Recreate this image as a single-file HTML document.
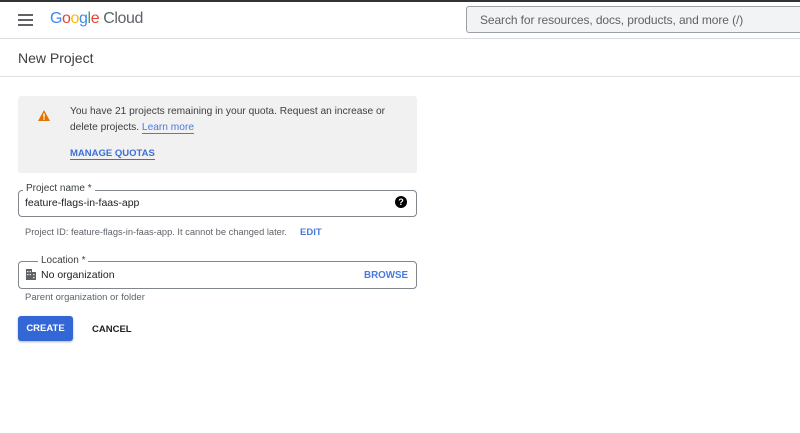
<!DOCTYPE html>
<html><head><style>
body{margin:0;width:800px;height:433px;background:#fff;font-family:"Liberation Sans",Arial,sans-serif;position:relative;overflow:hidden;color:#202124}
.a{position:absolute}
</style></head><body>
<div class="a" style="left:0;top:0;width:800px;height:2px;background:#333"></div>
<div class="a" style="left:18px;top:14px;width:15px;height:2px;background:#5f6368;box-shadow:0 5px 0 #5f6368,0 10px 0 #5f6368"></div>
<div class="a" style="left:50px;top:10px;font-size:16px;letter-spacing:-0.4px"><span style="color:#4285f4">G</span><span style="color:#ea4335">o</span><span style="color:#fbbc04">o</span><span style="color:#4285f4">g</span><span style="color:#34a853">l</span><span style="color:#ea4335">e</span> <span style="color:#5f6368">Cloud</span></div>
<div class="a" style="left:466px;top:6px;width:340px;height:27px;border:1px solid #9aa0a6;border-radius:3px;background:#f1f3f4;box-sizing:border-box"></div>
<div class="a" style="left:480px;top:13px;font-size:12px;color:#5f6368;letter-spacing:-0.1px">Search for resources, docs, products, and more (/)</div>
<div class="a" style="left:0;top:38px;width:800px;height:1px;background:#dadce0"></div>
<div class="a" style="left:18px;top:50px;font-size:14px;color:#3c4043">New Project</div>
<div class="a" style="left:0;top:76px;width:800px;height:1px;background:#e0e0e0"></div>
<div class="a" style="left:18px;top:96px;width:399px;height:77px;background:#f1f1f1;border-radius:3px"></div>
<svg class="a" style="left:38px;top:110px" width="12" height="11" viewBox="0 0 12 11"><path d="M6 0L12 11H0Z" fill="#e37400"/><rect x="5.3" y="3.5" width="1.4" height="4" fill="#fff"/><rect x="5.3" y="8.3" width="1.4" height="1.4" fill="#fff"/></svg>
<div class="a" style="left:70px;top:104px;font-size:10.2px;line-height:16px;color:#3c4043;width:330px">You have 21 projects remaining in your quota. Request an increase or delete projects. <span style="color:#4a7ae0;border-bottom:1px solid #4a7ae0">Learn more</span></div>
<div class="a" style="left:70px;top:148px;font-size:9.5px;font-weight:bold;color:#3d6fd8;border-bottom:1px solid #3d6fd8">MANAGE QUOTAS</div>
<div class="a" style="left:18px;top:190px;width:399px;height:27px;border:1px solid #80868b;border-radius:4px;box-sizing:border-box"></div>
<div class="a" style="left:23px;top:183px;background:#fff;padding:0 3px;font-size:10px;color:#3c4043">Project name *</div>
<div class="a" style="left:25px;top:197px;font-size:10.5px">feature-flags-in-faas-app</div>
<div class="a" style="left:395px;top:196px;width:12px;height:12px;border-radius:50%;background:#000;color:#fff;font-size:9px;font-weight:bold;text-align:center;line-height:12px">?</div>
<div class="a" style="left:25px;top:227px;font-size:9.3px;color:#5f6368">Project ID: feature-flags-in-faas-app. It cannot be changed later.</div>
<div class="a" style="left:300px;top:227px;font-size:9.5px;font-weight:bold;color:#4a7ae0">EDIT</div>
<div class="a" style="left:18px;top:261px;width:399px;height:28px;border:1px solid #80868b;border-radius:4px;box-sizing:border-box"></div>
<div class="a" style="left:38px;top:255px;background:#fff;padding:0 3px;font-size:10px;color:#3c4043">Location *</div>
<svg class="a" style="left:26px;top:269px" width="10" height="11" viewBox="0 0 10 11"><rect x="0" y="0" width="6" height="11" fill="#5f6368"/><rect x="6" y="3" width="4" height="8" fill="#5f6368"/><g fill="#fff"><rect x="1.2" y="2" width="1.2" height="1.2"/><rect x="3.6" y="2" width="1.2" height="1.2"/><rect x="1.2" y="5" width="1.2" height="1.2"/><rect x="3.6" y="5" width="1.2" height="1.2"/><rect x="7.2" y="5" width="1.2" height="1.2"/><rect x="7.2" y="8" width="1.2" height="1.2"/></g></svg>
<div class="a" style="left:41px;top:269px;font-size:10.5px">No organization</div>
<div class="a" style="left:364px;top:270px;font-size:9.8px;font-weight:bold;color:#4a7ae0">BROWSE</div>
<div class="a" style="left:25px;top:292px;font-size:9.5px;color:#5f6368">Parent organization or folder</div>
<div class="a" style="left:18px;top:316px;width:55px;height:25px;background:#3367d6;border-radius:3px;box-shadow:0 1px 2px rgba(0,0,0,.3);color:#fff;font-size:9.5px;font-weight:bold;text-align:center;line-height:25px">CREATE</div>
<div class="a" style="left:92px;top:324px;font-size:9.5px;font-weight:bold;color:#202124">CANCEL</div>
</body></html>
